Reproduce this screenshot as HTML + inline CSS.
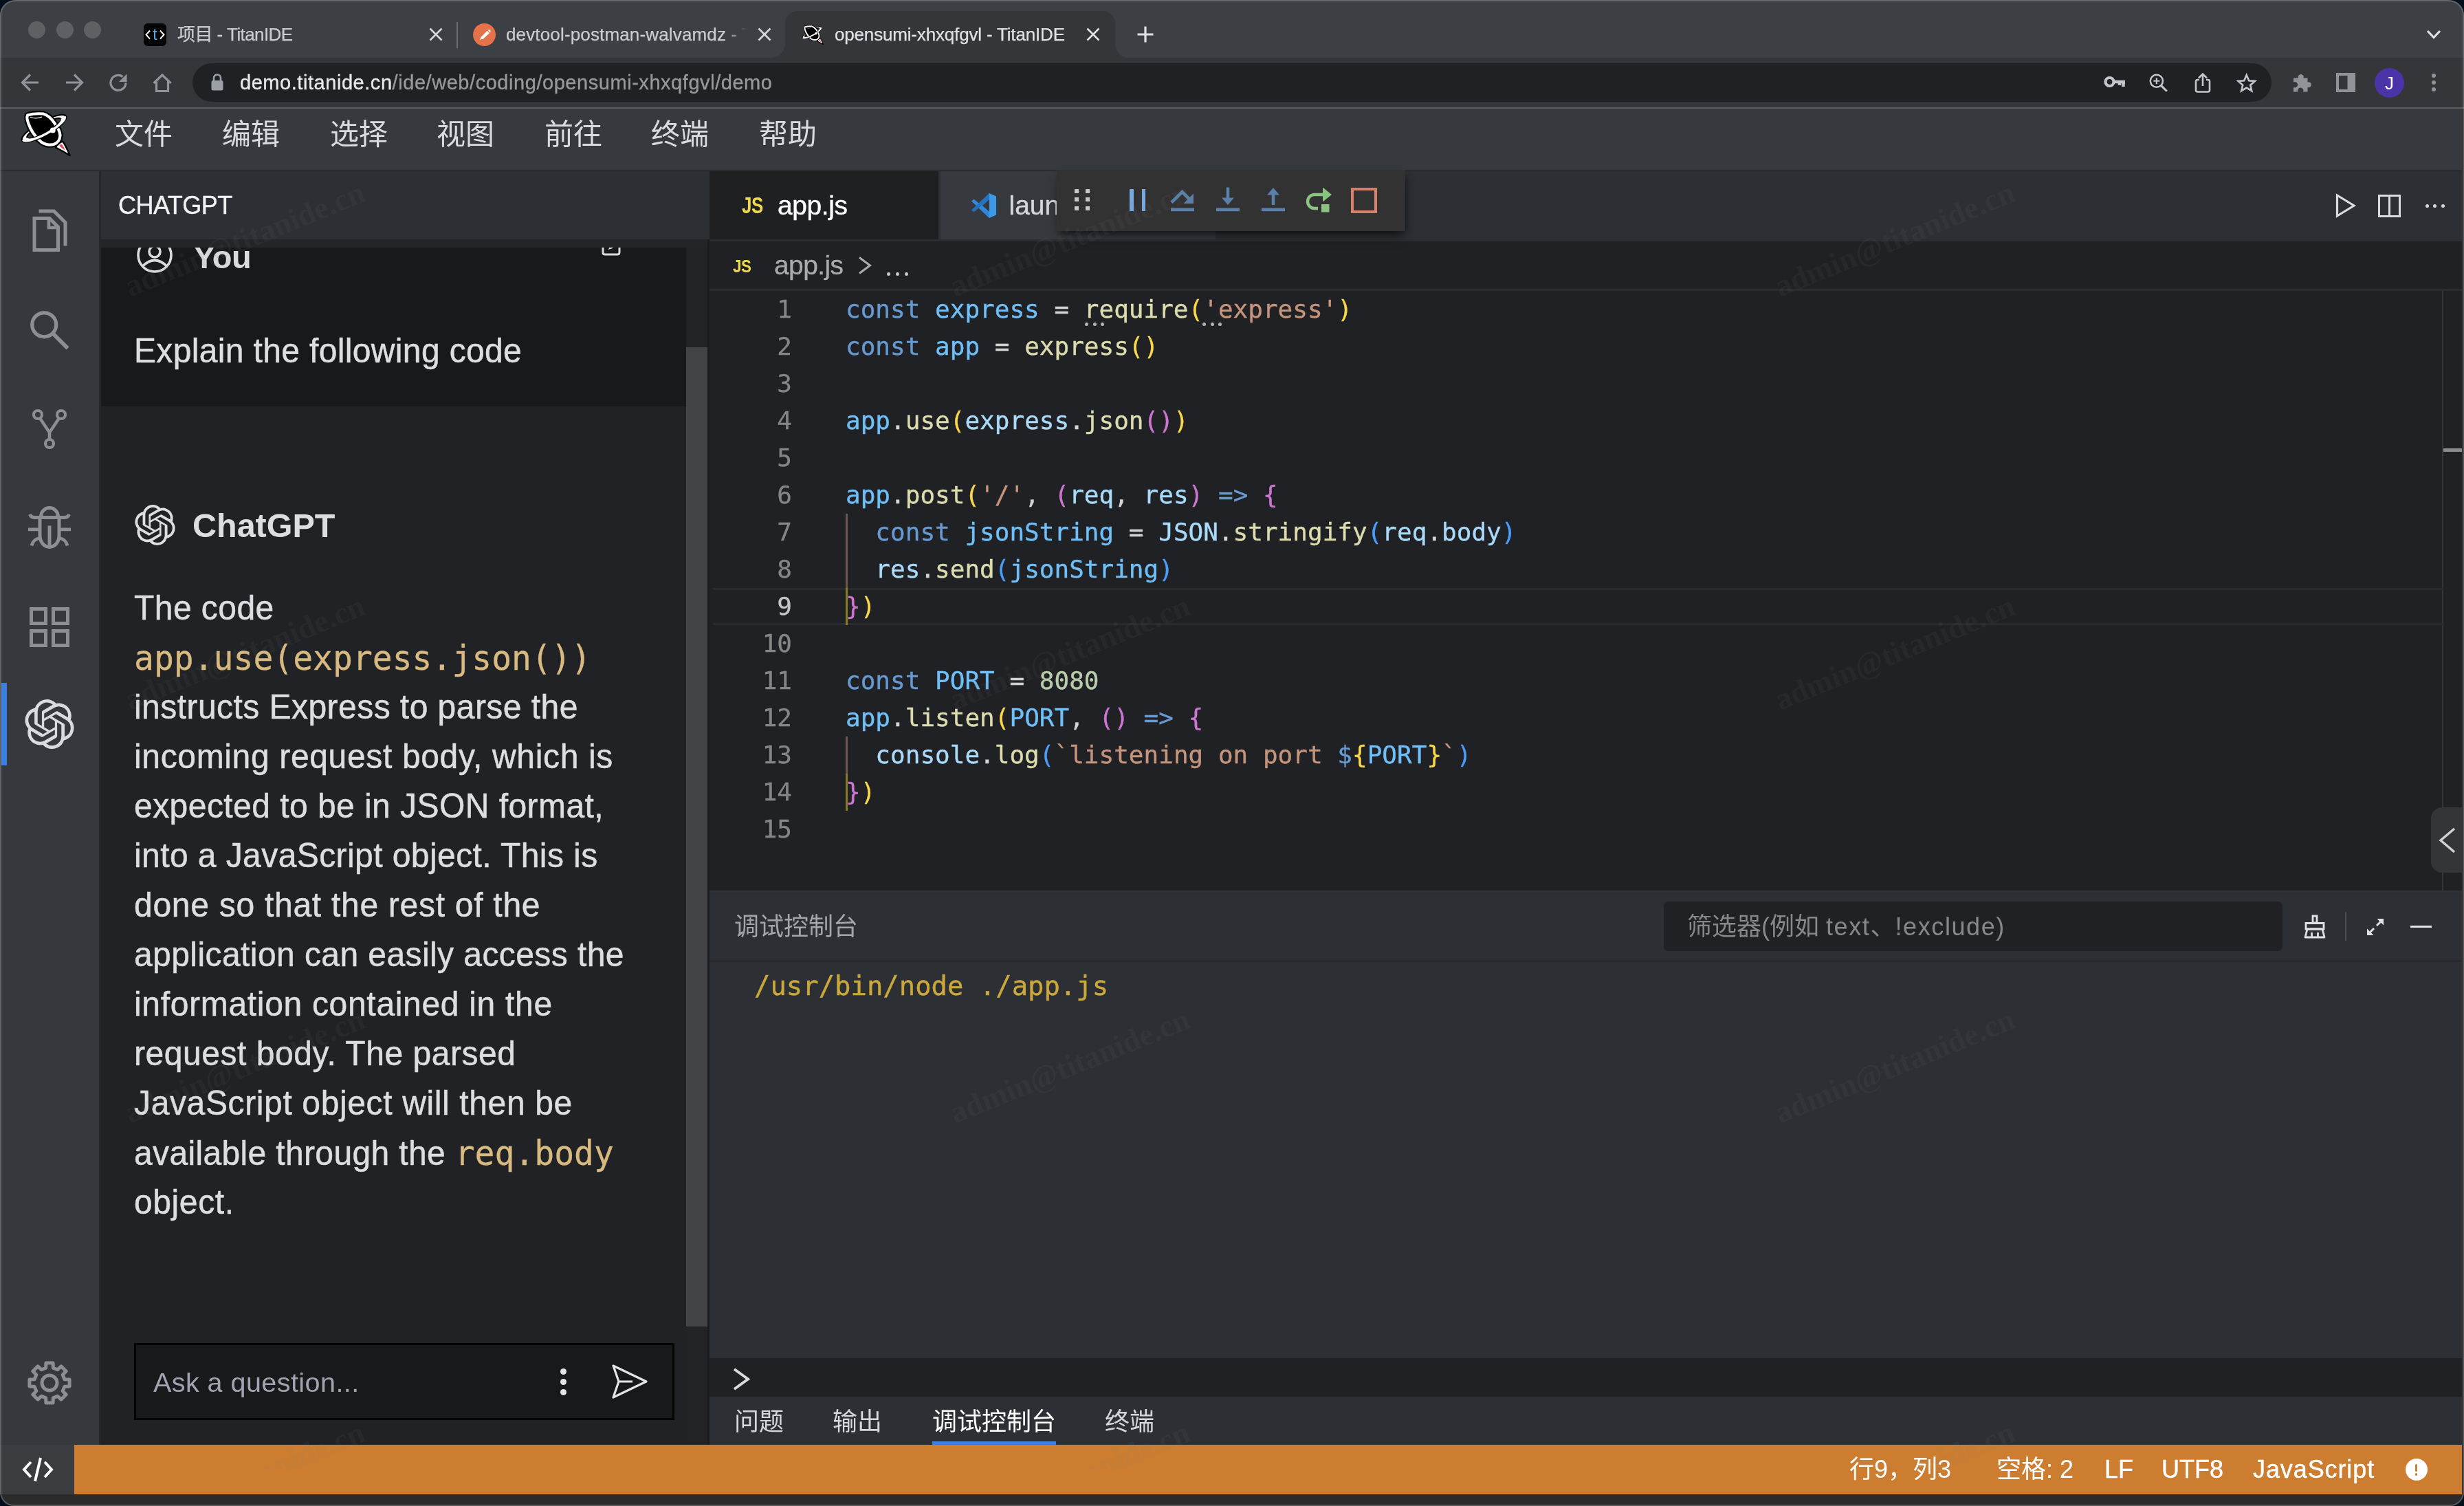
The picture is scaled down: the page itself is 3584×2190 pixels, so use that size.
<!DOCTYPE html>
<html lang="zh-CN"><head><meta charset="utf-8"><title>opensumi-xhxqfgvl - TitanIDE</title>
<style>
html,body{margin:0;padding:0;background:#050e1c;}
body{width:3584px;height:2190px;overflow:hidden;position:relative;font-family:"Liberation Sans","Noto Sans CJK SC",sans-serif;}
#win{position:absolute;left:0;top:0;width:3584px;height:2190px;border-radius:22px 22px 20px 20px;overflow:hidden;background:#2b2b2b;will-change:transform;}
#win div,#win svg{box-sizing:border-box}
.mono{font-family:"DejaVu Sans Mono","Liberation Mono","Noto Sans CJK SC",monospace;}
.wm{position:absolute;font-family:"Liberation Serif",serif;font-weight:bold;font-size:45.5px;color:rgba(125,125,125,.08);transform:rotate(-22.2deg);transform-origin:center;white-space:nowrap;width:440px;height:60px;line-height:60px;text-align:center;pointer-events:none}
</style></head><body><div id="win">
<!-- tab strip -->
<div style="position:absolute;left:0px;top:0px;width:3584px;height:84px;background:#3c3f43;"></div>
<div style="position:absolute;left:41.0px;top:30.5px;width:25px;height:25px;background:#5e6063;border-radius:50%"></div>
<div style="position:absolute;left:81.5px;top:30.5px;width:25px;height:25px;background:#5e6063;border-radius:50%"></div>
<div style="position:absolute;left:121.5px;top:30.5px;width:25px;height:25px;background:#5e6063;border-radius:50%"></div>
<div style="position:absolute;left:0px;top:84px;width:3584px;height:73px;background:#35363a;"></div>
<div style="position:absolute;left:1142px;top:16px;width:480px;height:70px;background:#35363a;border-radius:18px 18px 0 0"></div>
<svg style="position:absolute;left:1122px;top:64px;" width="20" height="20" viewBox="0 0 20 20" fill="none"><path d="M20 0 V20 H0 A20 20 0 0 0 20 0Z" fill="#35363a"/></svg>
<svg style="position:absolute;left:1622px;top:64px;" width="20" height="20" viewBox="0 0 20 20" fill="none"><path d="M0 0 V20 H20 A20 20 0 0 1 0 0Z" fill="#35363a"/></svg>
<div style="position:absolute;left:209px;top:34px;width:33px;height:33px;background:#050505;border-radius:6px"></div>
<svg style="position:absolute;left:209px;top:34px;" width="33" height="33" viewBox="0 0 33 33" fill="none"><path d="M9 10.5 L3.5 16.5 L9 22.5 M24 10.5 L29.5 16.5 L24 22.5" stroke="#fff" stroke-width="1.9" fill="none"/></svg>
<div style="position:absolute;left:209px;top:26.5px;height:46px;line-height:46px;font-size:23px;color:#5aa9e6;white-space:pre;width:33px;text-align:center;">t</div>
<div style="position:absolute;left:258px;top:24.0px;height:52px;line-height:52px;font-size:26px;color:#c9ccd0;white-space:pre;letter-spacing:-0.6px;-webkit-text-stroke-width:0.25px;">项目 - TitanIDE</div>
<svg style="position:absolute;left:622px;top:38px;" width="24" height="24" viewBox="0 0 24 24" fill="none"><path d="M3.5 3.5 L20.5 20.5 M20.5 3.5 L3.5 20.5" stroke="#d5d7da" stroke-width="2.6"/></svg>
<div style="position:absolute;left:664px;top:32px;width:2px;height:38px;background:#6a6d70;"></div>
<svg style="position:absolute;left:688px;top:34px;" width="33" height="33" viewBox="0 0 33 33" fill="none"><circle cx="16.5" cy="16.5" r="16.5" fill="#e6724a"/><path d="M9.5 24.5 L12 19.5 L21 10.5 Q23.5 8 25 10 Q26.5 12 24 14 L15 22.5 Z" fill="#fff"/><path d="M20.5 9.5 L24.5 14" stroke="#e6724a" stroke-width="1.2"/><path d="M9.5 24.5 L13.5 23.2" stroke="#e6724a" stroke-width="1"/></svg>
<div style="position:absolute;left:736px;top:24px;width:354px;height:52px;overflow:hidden;-webkit-mask-image:linear-gradient(90deg,#000 0,#000 318px,transparent 350px);mask-image:linear-gradient(90deg,#000 0,#000 318px,transparent 350px)"><div style="position:absolute;left:0px;top:0.0px;height:52px;line-height:52px;font-size:26px;color:#c9ccd0;white-space:pre;letter-spacing:0.15px;-webkit-text-stroke-width:0.25px;">devtool-postman-walvamdz - TitanIDE</div></div>
<svg style="position:absolute;left:1100px;top:38px;" width="24" height="24" viewBox="0 0 24 24" fill="none"><path d="M3.5 3.5 L20.5 20.5 M20.5 3.5 L3.5 20.5" stroke="#d5d7da" stroke-width="2.6"/></svg>
<svg style="position:absolute;left:1161.6px;top:34.7px;" width="43.75" height="35" viewBox="0 0 100 80" fill="none"><defs><clipPath id="cfa"><rect x="0" y="-10" width="100" height="38.7"/></clipPath><clipPath id="cna"><rect x="0" y="28.7" width="100" height="40"/></clipPath></defs><g transform="rotate(-29 44 28.7)"><path clip-path="url(#cfa)" fill-rule="evenodd" d="M7.5 28.7 A36.5 10 0 1 0 80.5 28.7 A36.5 10 0 1 0 7.5 28.7 Z M16 28.7 A28 6.6 0 1 1 72 28.7 A28 6.6 0 1 1 16 28.7Z" fill="#fff" stroke="#000" stroke-width="2.2"/></g><path d="M61 56.5 Q63 50 71 47.5 Q76 54 81.5 68 Q70 61 61 56.5Z" fill="#fff" stroke="#000" stroke-width="2.4" stroke-linejoin="round"/><path d="M66.5 53.5 Q68.5 50.5 71 53 L75 60.8 Q69 57.5 66.5 53.5Z" fill="#e8505b"/><path d="M20 9.5 Q30 6.5 43 7.5 Q52 10 60 22 Q67 31 67.5 39 Q67 49 58 52 Q48 54 40 48.5 Q30 40 24 28 Q17.5 14 20 9.5Z" fill="#000" stroke="#000" stroke-width="8.4" stroke-linejoin="round"/><path d="M20 9.5 Q30 6.5 43 7.5 Q52 10 60 22 Q67 31 67.5 39 Q67 49 58 52 Q48 54 40 48.5 Q30 40 24 28 Q17.5 14 20 9.5Z" fill="#000" stroke="#fff" stroke-width="4.2" stroke-linejoin="round"/><path d="M24 12.2 Q32 15.6 41 12" stroke="#fff" stroke-width="1.1" fill="none"/><g transform="rotate(-29 44 28.7)"><path clip-path="url(#cna)" fill-rule="evenodd" d="M7.5 28.7 A36.5 10 0 1 0 80.5 28.7 A36.5 10 0 1 0 7.5 28.7 Z M16 28.7 A28 6.6 0 1 1 72 28.7 A28 6.6 0 1 1 16 28.7Z" fill="#fff" stroke="#000" stroke-width="2.2"/><path clip-path="url(#cna)" fill-rule="evenodd" d="M7.5 28.7 A36.5 10 0 1 0 80.5 28.7 A36.5 10 0 1 0 7.5 28.7 Z M16 28.7 A28 6.6 0 1 1 72 28.7 A28 6.6 0 1 1 16 28.7Z" fill="#fff"/></g><circle cx="56.8" cy="31.4" r="3.9" fill="#fff"/></svg>
<div style="position:absolute;left:1214px;top:24.0px;height:52px;line-height:52px;font-size:26px;color:#dfe1e5;white-space:pre;letter-spacing:-0.17px;-webkit-text-stroke-width:0.25px;">opensumi-xhxqfgvl - TitanIDE</div>
<svg style="position:absolute;left:1578px;top:38px;" width="24" height="24" viewBox="0 0 24 24" fill="none"><path d="M3.5 3.5 L20.5 20.5 M20.5 3.5 L3.5 20.5" stroke="#dfe1e5" stroke-width="2.6"/></svg>
<svg style="position:absolute;left:1652px;top:36px;" width="28" height="28" viewBox="0 0 28 28" fill="none"><path d="M14 2.5 V25.5 M2.5 14 H25.5" stroke="#dfe1e5" stroke-width="3.2"/></svg>
<svg style="position:absolute;left:3526px;top:40px;" width="28" height="20" viewBox="0 0 28 20" fill="none"><path d="M5 5 L14 14.5 L23 5" stroke="#dfe1e5" stroke-width="3.2"/></svg>
<!-- toolbar -->
<svg style="position:absolute;left:28px;top:104px;" width="32" height="32" viewBox="0 0 32 32" fill="none"><path d="M28 16 H5 M16 4.5 L4.5 16 L16 27.5" stroke="#909398" stroke-width="3.2"/></svg>
<svg style="position:absolute;left:92px;top:104px;" width="32" height="32" viewBox="0 0 32 32" fill="none"><path d="M4 16 H27 M16 4.5 L27.5 16 L16 27.5" stroke="#909398" stroke-width="3.2"/></svg>
<svg style="position:absolute;left:156px;top:104px;" width="32" height="32" viewBox="0 0 32 32" fill="none"><path d="M27 16.5 A11 11 0 1 1 22.5 7.5" stroke="#909398" stroke-width="3.2"/><path d="M28.5 3.5 V15 H17 Z" fill="#909398"/></svg>
<svg style="position:absolute;left:220px;top:104px;" width="32" height="32" viewBox="0 0 32 32" fill="none"><path d="M3.5 17 L16 5 L28.5 17 M7.5 14.5 V28.5 H24.5 V14.5" stroke="#909398" stroke-width="3.2"/></svg>
<div style="position:absolute;left:280px;top:92px;width:3024px;height:56px;background:#202124;border-radius:28px"></div>
<svg style="position:absolute;left:306px;top:106px;" width="20" height="28" viewBox="0 0 20 28" fill="none"><rect x="1.5" y="11" width="17" height="14.5" rx="2.5" fill="#9aa0a6"/><path d="M5 12 V7.5 A5 5 0 0 1 15 7.5 V12" stroke="#9aa0a6" stroke-width="2.6"/></svg>
<div style="position:absolute;left:349px;top:91.0px;height:58px;line-height:58px;font-size:29px;color:#98999c;white-space:pre;letter-spacing:0.55px;-webkit-text-stroke-width:0.35px;"><span style="color:#e8eaed">demo.titanide.cn</span>/ide/web/coding/opensumi-xhxqfgvl/demo</div>
<svg style="position:absolute;left:3060px;top:106px;" width="34" height="28" viewBox="0 0 34 28" fill="none"><circle cx="8.5" cy="13" r="6" stroke="#c3c6ca" stroke-width="4.2"/><path d="M14 13 H31 M28.5 13 V20 M23 13 V18" stroke="#c3c6ca" stroke-width="4.6"/></svg>
<svg style="position:absolute;left:3125px;top:106px;" width="31" height="29" viewBox="0 0 34 32" fill="none"><circle cx="13" cy="13" r="10" stroke="#c3c6ca" stroke-width="2.8"/><path d="M20.5 20.5 L29.5 29.5" stroke="#c3c6ca" stroke-width="3.4"/><path d="M13 8 V18 M8 13 H18" stroke="#c3c6ca" stroke-width="2.4"/></svg>
<svg style="position:absolute;left:3191px;top:105px;" width="26" height="31" viewBox="0 0 26 31" fill="none"><path d="M8 11 H5.5 Q3 11 3 13.5 V26 Q3 28.5 5.5 28.5 H20.5 Q23 28.5 23 26 V13.5 Q23 11 20.5 11 H18" stroke="#c3c6ca" stroke-width="2.6"/><path d="M13 20 V3 M7 8.5 L13 2.5 L19 8.5" stroke="#c3c6ca" stroke-width="2.6"/></svg>
<svg style="position:absolute;left:3253.3px;top:105.5px;" width="29.4" height="29.4" viewBox="0 0 32 32" fill="none"><path d="M16 3.5 L19.8 12.2 L29.2 13 L22 19.2 L24.2 28.5 L16 23.6 L7.8 28.5 L10 19.2 L2.8 13 L12.2 12.2 Z" stroke="#c3c6ca" stroke-width="2.9" stroke-linejoin="miter"/></svg>
<svg style="position:absolute;left:3333px;top:104px;" width="32" height="32" viewBox="0 0 32 32" fill="none"><path d="M3 9.5 H10 A4 4 0 1 1 17.5 9.5 H23.5 V15.5 A4 4 0 1 1 23.5 23 V29.5 H17 A4.2 4.2 0 1 0 9.5 29.5 H3 V23 A4.2 4.2 0 1 0 3 15.5 Z" fill="#909398"/></svg>
<svg style="position:absolute;left:3398px;top:106px;" width="28" height="28" viewBox="0 0 28 28" fill="none"><rect x="2" y="2" width="24" height="24" stroke="#909398" stroke-width="4"/><rect x="16.5" y="2" width="10" height="24" fill="#909398"/></svg>
<div style="position:absolute;left:3454px;top:98.5px;width:43px;height:43px;background:#4a34a8;border-radius:50%"></div>
<div style="position:absolute;left:3454px;top:94.5px;height:52px;line-height:52px;font-size:26px;color:#fff;white-space:pre;width:43px;text-align:center;">J</div>
<div style="position:absolute;left:3536.8px;top:106.6px;width:6.4px;height:6.4px;background:#909398;border-radius:50%"></div>
<div style="position:absolute;left:3536.8px;top:116.8px;width:6.4px;height:6.4px;background:#909398;border-radius:50%"></div>
<div style="position:absolute;left:3536.8px;top:126.99999999999999px;width:6.4px;height:6.4px;background:#909398;border-radius:50%"></div>
<div style="position:absolute;left:0px;top:155.5px;width:3584px;height:2.5px;background:#5b5d60;"></div>
<!-- IDE menubar -->
<div style="position:absolute;left:0px;top:158px;width:3584px;height:89px;background:#36393d;"></div>
<svg style="position:absolute;left:20px;top:158px;" width="100" height="80" viewBox="0 0 100 80" fill="none"><defs><clipPath id="cfb"><rect x="0" y="-10" width="100" height="38.7"/></clipPath><clipPath id="cnb"><rect x="0" y="28.7" width="100" height="40"/></clipPath></defs><g transform="rotate(-29 44 28.7)"><path clip-path="url(#cfb)" fill-rule="evenodd" d="M7.5 28.7 A36.5 10 0 1 0 80.5 28.7 A36.5 10 0 1 0 7.5 28.7 Z M16 28.7 A28 6.6 0 1 1 72 28.7 A28 6.6 0 1 1 16 28.7Z" fill="#fff" stroke="#000" stroke-width="2.2"/></g><path d="M61 56.5 Q63 50 71 47.5 Q76 54 81.5 68 Q70 61 61 56.5Z" fill="#fff" stroke="#000" stroke-width="2.4" stroke-linejoin="round"/><path d="M66.5 53.5 Q68.5 50.5 71 53 L75 60.8 Q69 57.5 66.5 53.5Z" fill="#e8505b"/><path d="M20 9.5 Q30 6.5 43 7.5 Q52 10 60 22 Q67 31 67.5 39 Q67 49 58 52 Q48 54 40 48.5 Q30 40 24 28 Q17.5 14 20 9.5Z" fill="#000" stroke="#000" stroke-width="8.4" stroke-linejoin="round"/><path d="M20 9.5 Q30 6.5 43 7.5 Q52 10 60 22 Q67 31 67.5 39 Q67 49 58 52 Q48 54 40 48.5 Q30 40 24 28 Q17.5 14 20 9.5Z" fill="#000" stroke="#fff" stroke-width="4.2" stroke-linejoin="round"/><path d="M24 12.2 Q32 15.6 41 12" stroke="#fff" stroke-width="1.1" fill="none"/><g transform="rotate(-29 44 28.7)"><path clip-path="url(#cnb)" fill-rule="evenodd" d="M7.5 28.7 A36.5 10 0 1 0 80.5 28.7 A36.5 10 0 1 0 7.5 28.7 Z M16 28.7 A28 6.6 0 1 1 72 28.7 A28 6.6 0 1 1 16 28.7Z" fill="#fff" stroke="#000" stroke-width="2.2"/><path clip-path="url(#cnb)" fill-rule="evenodd" d="M7.5 28.7 A36.5 10 0 1 0 80.5 28.7 A36.5 10 0 1 0 7.5 28.7 Z M16 28.7 A28 6.6 0 1 1 72 28.7 A28 6.6 0 1 1 16 28.7Z" fill="#fff"/></g><circle cx="56.8" cy="31.4" r="3.9" fill="#fff"/></svg>
<div style="position:absolute;left:167px;top:154.0px;height:84px;line-height:84px;font-size:42px;color:#d9dbde;white-space:pre;font-family:"Liberation Sans","Noto Sans CJK SC",sans-serif;-webkit-text-stroke-width:0.5px;">文件</div>
<div style="position:absolute;left:323px;top:154.0px;height:84px;line-height:84px;font-size:42px;color:#d9dbde;white-space:pre;font-family:"Liberation Sans","Noto Sans CJK SC",sans-serif;-webkit-text-stroke-width:0.5px;">编辑</div>
<div style="position:absolute;left:480px;top:154.0px;height:84px;line-height:84px;font-size:42px;color:#d9dbde;white-space:pre;font-family:"Liberation Sans","Noto Sans CJK SC",sans-serif;-webkit-text-stroke-width:0.5px;">选择</div>
<div style="position:absolute;left:635px;top:154.0px;height:84px;line-height:84px;font-size:42px;color:#d9dbde;white-space:pre;font-family:"Liberation Sans","Noto Sans CJK SC",sans-serif;-webkit-text-stroke-width:0.5px;">视图</div>
<div style="position:absolute;left:792px;top:154.0px;height:84px;line-height:84px;font-size:42px;color:#d9dbde;white-space:pre;font-family:"Liberation Sans","Noto Sans CJK SC",sans-serif;-webkit-text-stroke-width:0.5px;">前往</div>
<div style="position:absolute;left:947px;top:154.0px;height:84px;line-height:84px;font-size:42px;color:#d9dbde;white-space:pre;font-family:"Liberation Sans","Noto Sans CJK SC",sans-serif;-webkit-text-stroke-width:0.5px;">终端</div>
<div style="position:absolute;left:1104px;top:154.0px;height:84px;line-height:84px;font-size:42px;color:#d9dbde;white-space:pre;font-family:"Liberation Sans","Noto Sans CJK SC",sans-serif;-webkit-text-stroke-width:0.5px;">帮助</div>
<!-- activity bar -->
<div style="position:absolute;left:0px;top:247px;width:144px;height:1855px;background:#35383c;"></div>
<div style="position:absolute;left:0px;top:247px;width:3584px;height:2px;background:#2a2c2f;"></div>
<svg style="position:absolute;left:36.0px;top:299.5px;" width="72" height="72" viewBox="0 0 72 72" fill="none"><path d="M20.5 7 H42.5 L59 23.5 V57.5" stroke="#8b8e92" stroke-width="5" fill="none"/><path d="M14 17.5 H36 L48.5 30 V63.5 H14 Z" stroke="#8b8e92" stroke-width="5" stroke-linejoin="miter"/><path d="M35 17 V31 H49" stroke="#8b8e92" stroke-width="4.6"/></svg>
<svg style="position:absolute;left:36.0px;top:443.7px;" width="72" height="72" viewBox="0 0 72 72" fill="none"><circle cx="28.2" cy="28.3" r="17.5" stroke="#8b8e92" stroke-width="5.2"/><path d="M41 41 L62.5 62.5" stroke="#8b8e92" stroke-width="5.6"/></svg>
<svg style="position:absolute;left:36.0px;top:587.5px;" width="72" height="72" viewBox="0 0 72 72" fill="none"><circle cx="19" cy="15" r="6" stroke="#8b8e92" stroke-width="4.2"/><circle cx="53" cy="15" r="6" stroke="#8b8e92" stroke-width="4.2"/><circle cx="36" cy="57" r="6" stroke="#8b8e92" stroke-width="4.2"/><path d="M22 20 L36 41 L50 20 M36 41 V51" stroke="#8b8e92" stroke-width="4.5"/></svg>
<svg style="position:absolute;left:36.0px;top:732.0px;" width="72" height="72" viewBox="0 0 72 72" fill="none"><path d="M23.5 19 A12.5 12.5 0 0 1 48.5 19" stroke="#8b8e92" stroke-width="5"/><path d="M7.5 16 Q9 20.5 14 20.5 H58 Q63 20.5 64.5 16" stroke="#8b8e92" stroke-width="5"/><path d="M22 20 V47 A14 16.5 0 0 0 50 47 V20" stroke="#8b8e92" stroke-width="5"/><path d="M36 32.5 V63" stroke="#8b8e92" stroke-width="5"/><path d="M5 37.8 H20 M52 37.8 H67 M23 50 Q12 52 10 61.5 M49 50 Q60 52 62 61.5" stroke="#8b8e92" stroke-width="4.8"/></svg>
<svg style="position:absolute;left:36.0px;top:876.0px;" width="72" height="72" viewBox="0 0 72 72" fill="none"><rect x="9.5" y="9.5" width="21" height="21" stroke="#8b8e92" stroke-width="5"/><rect x="41.5" y="9.5" width="21" height="21" stroke="#8b8e92" stroke-width="5"/><rect x="9.5" y="41.5" width="21" height="21" stroke="#8b8e92" stroke-width="5"/><rect x="41.5" y="41.5" width="21" height="21" stroke="#8b8e92" stroke-width="5"/></svg>
<div style="position:absolute;left:2px;top:993px;width:7.5px;height:120px;background:#3b7fe0;"></div>
<svg style="position:absolute;left:36px;top:1016.5px;" width="72" height="72" viewBox="0 0 24 24" fill="none"><path d="M22.2819 9.8211a5.9847 5.9847 0 0 0-.5157-4.9108 6.0462 6.0462 0 0 0-6.5098-2.9A6.0651 6.0651 0 0 0 4.9807 4.1818a5.9847 5.9847 0 0 0-3.9977 2.9 6.0462 6.0462 0 0 0 .7427 7.0966 5.98 5.98 0 0 0 .511 4.9107 6.051 6.051 0 0 0 6.5146 2.9001A5.9847 5.9847 0 0 0 13.2599 24a6.0557 6.0557 0 0 0 5.7718-4.2058 5.9894 5.9894 0 0 0 3.9977-2.9001 6.0557 6.0557 0 0 0-.7475-7.0729zm-9.022 12.6081a4.4755 4.4755 0 0 1-2.8764-1.0408l.1419-.0804 4.7783-2.7582a.7948.7948 0 0 0 .3927-.6813v-6.7369l2.02 1.1686a.071.071 0 0 1 .038.052v5.5826a4.504 4.504 0 0 1-4.4945 4.4944zm-9.6607-4.1254a4.4708 4.4708 0 0 1-.5346-3.0137l.142.0852 4.783 2.7582a.7712.7712 0 0 0 .7806 0l5.8428-3.3685v2.3324a.0804.0804 0 0 1-.0332.0615L9.74 19.9502a4.4992 4.4992 0 0 1-6.1408-1.6464zM2.3408 7.8956a4.485 4.485 0 0 1 2.3655-1.9728V11.6a.7664.7664 0 0 0 .3879.6765l5.8144 3.3543-2.0201 1.1685a.0757.0757 0 0 1-.071 0l-4.8303-2.7865A4.504 4.504 0 0 1 2.3408 7.872zm16.5963 3.8558L13.1038 8.364 15.1192 7.2a.0757.0757 0 0 1 .071 0l4.8303 2.7913a4.4944 4.4944 0 0 1-.6765 8.1042v-5.6772a.79.79 0 0 0-.407-.667zm2.0107-3.0231l-.142-.0852-4.7735-2.7818a.7759.7759 0 0 0-.7854 0L9.409 9.2297V6.8974a.0662.0662 0 0 1 .0284-.0615l4.8303-2.7866a4.4992 4.4992 0 0 1 6.6802 4.66zM8.3065 12.863l-2.02-1.1638a.0804.0804 0 0 1-.038-.0567V6.0742a4.4992 4.4992 0 0 1 7.3757-3.4537l-.142.0805L8.704 5.459a.7948.7948 0 0 0-.3927.6813zm1.0976-2.3654l2.602-1.4998 2.6069 1.4998v2.9994l-2.5974 1.4997-2.6067-1.4997Z" fill="#d9dbde"/></svg>
<svg style="position:absolute;left:36px;top:1974.7px;" width="72" height="72" viewBox="0 0 72 72" fill="none"><path d="M65.1 30.9 L65.1 41.1 L57.9 41.3 L55.2 47.8 L60.1 53.0 L53.0 60.1 L47.8 55.2 L41.3 57.9 L41.1 65.1 L30.9 65.1 L30.7 57.9 L24.2 55.2 L19.0 60.1 L11.9 53.0 L16.8 47.8 L14.1 41.3 L6.9 41.1 L6.9 30.9 L14.1 30.7 L16.8 24.2 L11.9 19.0 L19.0 11.9 L24.2 16.8 L30.7 14.1 L30.9 6.9 L41.1 6.9 L41.3 14.1 L47.8 16.8 L53.0 11.9 L60.1 19.0 L55.2 24.2 L57.9 30.7Z" stroke="#8b8e92" stroke-width="5" stroke-linejoin="round"/><circle cx="36" cy="36" r="11" stroke="#8b8e92" stroke-width="5"/></svg>
<!-- chat panel -->
<div style="position:absolute;left:144px;top:249px;width:888px;height:1853px;background:#212225;"></div>
<div style="position:absolute;left:144px;top:249px;width:3px;height:1853px;background:#25272a;"></div>
<div style="position:absolute;left:998px;top:348px;width:31px;height:1754px;background:#222326;"></div>
<div style="position:absolute;left:998px;top:505px;width:31px;height:1424px;background:#434447;"></div>
<div style="position:absolute;left:1029px;top:348px;width:3px;height:1754px;background:#1b1c1e;"></div>
<div style="position:absolute;left:1029px;top:249px;width:3px;height:99px;background:#2c2f33;"></div>
<div style="position:absolute;left:147px;top:360px;width:851px;height:231px;background:#18191b;"></div>
<svg style="position:absolute;left:198px;top:344px;" width="54" height="54" viewBox="0 0 54 54" fill="none"><circle cx="27" cy="27" r="24" stroke="#d9dbde" stroke-width="3.6"/><circle cx="27" cy="22" r="8" stroke="#d9dbde" stroke-width="3.6"/><path d="M9.5 43 Q27 26 44.5 43" stroke="#d9dbde" stroke-width="3.6"/></svg>
<div style="position:absolute;left:281.5px;top:327.0px;height:94px;line-height:94px;font-size:47px;color:#d9dbde;white-space:pre;font-weight:bold;letter-spacing:-0.5px;">You</div>
<svg style="position:absolute;left:874px;top:345px;" width="30" height="28" viewBox="0 0 30 28" fill="none"><path d="M15 4 H6 Q3 4 3 7 V22 Q3 25 6 25 H24 Q27 25 27 22 V13" stroke="#d9dbde" stroke-width="3"/><path d="M11 18 L13 12 L24 1 L28 5 L17 16 Z" fill="#d9dbde"/></svg>
<div style="position:absolute;left:147px;top:249px;width:882px;height:99px;background:#2c2f33;"></div>
<div style="position:absolute;left:147px;top:348px;width:882px;height:12px;background:#242528;"></div>
<div style="position:absolute;left:172px;top:262.5px;height:72px;line-height:72px;font-size:36px;color:#f0f1f2;white-space:pre;letter-spacing:-0.5px;-webkit-text-stroke:0.4px #f0f1f2;">CHATGPT</div>
<div style="position:absolute;left:195px;top:462.5px;height:96px;line-height:96px;font-size:48px;color:#dcdee2;white-space:pre;letter-spacing:0.35px;-webkit-text-stroke:0.5px #dcdee2;transform:scaleY(1.045);transform-origin:0 67.3%;">Explain the following code</div>
<svg style="position:absolute;left:195.5px;top:733.5px;" width="59" height="59" viewBox="0 0 24 24" fill="none"><path d="M22.2819 9.8211a5.9847 5.9847 0 0 0-.5157-4.9108 6.0462 6.0462 0 0 0-6.5098-2.9A6.0651 6.0651 0 0 0 4.9807 4.1818a5.9847 5.9847 0 0 0-3.9977 2.9 6.0462 6.0462 0 0 0 .7427 7.0966 5.98 5.98 0 0 0 .511 4.9107 6.051 6.051 0 0 0 6.5146 2.9001A5.9847 5.9847 0 0 0 13.2599 24a6.0557 6.0557 0 0 0 5.7718-4.2058 5.9894 5.9894 0 0 0 3.9977-2.9001 6.0557 6.0557 0 0 0-.7475-7.0729zm-9.022 12.6081a4.4755 4.4755 0 0 1-2.8764-1.0408l.1419-.0804 4.7783-2.7582a.7948.7948 0 0 0 .3927-.6813v-6.7369l2.02 1.1686a.071.071 0 0 1 .038.052v5.5826a4.504 4.504 0 0 1-4.4945 4.4944zm-9.6607-4.1254a4.4708 4.4708 0 0 1-.5346-3.0137l.142.0852 4.783 2.7582a.7712.7712 0 0 0 .7806 0l5.8428-3.3685v2.3324a.0804.0804 0 0 1-.0332.0615L9.74 19.9502a4.4992 4.4992 0 0 1-6.1408-1.6464zM2.3408 7.8956a4.485 4.485 0 0 1 2.3655-1.9728V11.6a.7664.7664 0 0 0 .3879.6765l5.8144 3.3543-2.0201 1.1685a.0757.0757 0 0 1-.071 0l-4.8303-2.7865A4.504 4.504 0 0 1 2.3408 7.872zm16.5963 3.8558L13.1038 8.364 15.1192 7.2a.0757.0757 0 0 1 .071 0l4.8303 2.7913a4.4944 4.4944 0 0 1-.6765 8.1042v-5.6772a.79.79 0 0 0-.407-.667zm2.0107-3.0231l-.142-.0852-4.7735-2.7818a.7759.7759 0 0 0-.7854 0L9.409 9.2297V6.8974a.0662.0662 0 0 1 .0284-.0615l4.8303-2.7866a4.4992 4.4992 0 0 1 6.6802 4.66zM8.3065 12.863l-2.02-1.1638a.0804.0804 0 0 1-.038-.0567V6.0742a4.4992 4.4992 0 0 1 7.3757-3.4537l-.142.0805L8.704 5.459a.7948.7948 0 0 0-.3927.6813zm1.0976-2.3654l2.602-1.4998 2.6069 1.4998v2.9994l-2.5974 1.4997-2.6067-1.4997Z" fill="#dcdee2"/></svg>
<div style="position:absolute;left:280px;top:715.5px;height:97px;line-height:97px;font-size:48.5px;color:#dcdee2;white-space:pre;font-weight:bold;">ChatGPT</div>
<div style="position:absolute;left:195px;top:837.0px;height:96px;line-height:96px;font-size:48px;color:#dcdee2;white-space:pre;letter-spacing:0.45px;-webkit-text-stroke:0.5px #dcdee2;transform:scaleY(1.045);transform-origin:0 67.3%;">The code</div>
<div style="position:absolute;left:195px;top:909.0px;height:96px;line-height:96px;font-size:48px;color:#dcdee2;white-space:pre;letter-spacing:0px;-webkit-text-stroke:0.5px #dcdee2;transform:scaleY(1.045);transform-origin:0 67.3%;"><span class="mono" style="color:#d8ba80;font-size:48px;letter-spacing:0;-webkit-text-stroke:0.3px #d8ba80">app.use(express.json())</span></div>
<div style="position:absolute;left:195px;top:981.0px;height:96px;line-height:96px;font-size:48px;color:#dcdee2;white-space:pre;letter-spacing:0.45px;-webkit-text-stroke:0.5px #dcdee2;transform:scaleY(1.045);transform-origin:0 67.3%;">instructs Express to parse the</div>
<div style="position:absolute;left:195px;top:1053.0px;height:96px;line-height:96px;font-size:48px;color:#dcdee2;white-space:pre;letter-spacing:0.65px;-webkit-text-stroke:0.5px #dcdee2;transform:scaleY(1.045);transform-origin:0 67.3%;">incoming request body, which is</div>
<div style="position:absolute;left:195px;top:1125.0px;height:96px;line-height:96px;font-size:48px;color:#dcdee2;white-space:pre;letter-spacing:0.45px;-webkit-text-stroke:0.5px #dcdee2;transform:scaleY(1.045);transform-origin:0 67.3%;">expected to be in JSON format,</div>
<div style="position:absolute;left:195px;top:1197.0px;height:96px;line-height:96px;font-size:48px;color:#dcdee2;white-space:pre;letter-spacing:0.42px;-webkit-text-stroke:0.5px #dcdee2;transform:scaleY(1.045);transform-origin:0 67.3%;">into a JavaScript object. This is</div>
<div style="position:absolute;left:195px;top:1269.0px;height:96px;line-height:96px;font-size:48px;color:#dcdee2;white-space:pre;letter-spacing:0.72px;-webkit-text-stroke:0.5px #dcdee2;transform:scaleY(1.045);transform-origin:0 67.3%;">done so that the rest of the</div>
<div style="position:absolute;left:195px;top:1341.0px;height:96px;line-height:96px;font-size:48px;color:#dcdee2;white-space:pre;letter-spacing:0.42px;-webkit-text-stroke:0.5px #dcdee2;transform:scaleY(1.045);transform-origin:0 67.3%;">application can easily access the</div>
<div style="position:absolute;left:195px;top:1413.0px;height:96px;line-height:96px;font-size:48px;color:#dcdee2;white-space:pre;letter-spacing:0.68px;-webkit-text-stroke:0.5px #dcdee2;transform:scaleY(1.045);transform-origin:0 67.3%;">information contained in the</div>
<div style="position:absolute;left:195px;top:1485.0px;height:96px;line-height:96px;font-size:48px;color:#dcdee2;white-space:pre;letter-spacing:0.54px;-webkit-text-stroke:0.5px #dcdee2;transform:scaleY(1.045);transform-origin:0 67.3%;">request body. The parsed</div>
<div style="position:absolute;left:195px;top:1557.0px;height:96px;line-height:96px;font-size:48px;color:#dcdee2;white-space:pre;letter-spacing:0.63px;-webkit-text-stroke:0.5px #dcdee2;transform:scaleY(1.045);transform-origin:0 67.3%;">JavaScript object will then be</div>
<div style="position:absolute;left:195px;top:1629.0px;height:96px;line-height:96px;font-size:48px;color:#dcdee2;white-space:pre;letter-spacing:0.35px;-webkit-text-stroke:0.5px #dcdee2;transform:scaleY(1.045);transform-origin:0 67.3%;">available through the <span class="mono" style="color:#d8ba80;font-size:48px;letter-spacing:0;-webkit-text-stroke:0.3px #d8ba80">req.body</span></div>
<div style="position:absolute;left:195px;top:1701.0px;height:96px;line-height:96px;font-size:48px;color:#dcdee2;white-space:pre;letter-spacing:0.6px;-webkit-text-stroke:0.5px #dcdee2;transform:scaleY(1.045);transform-origin:0 67.3%;">object.</div>
<div style="position:absolute;left:195px;top:1953px;width:786px;height:112px;background:#18191b;border:3px solid #050506"></div>
<div style="position:absolute;left:223px;top:1970.5px;height:79px;line-height:79px;font-size:39.5px;color:#a0a4b0;white-space:pre;letter-spacing:0.45px;">Ask a question...</div>
<div style="position:absolute;left:814.5px;top:1990.0px;width:9px;height:9px;background:#e3e4e6;border-radius:50%"></div>
<div style="position:absolute;left:814.5px;top:2005.0px;width:9px;height:9px;background:#e3e4e6;border-radius:50%"></div>
<div style="position:absolute;left:814.5px;top:2020.0px;width:9px;height:9px;background:#e3e4e6;border-radius:50%"></div>
<svg style="position:absolute;left:888px;top:1982px;" width="56" height="54" viewBox="0 0 56 54" fill="none"><path d="M4 4 L52 27 L4 50 L12 27 Z M12 27 H32" stroke="#e3e4e6" stroke-width="3.2" stroke-linejoin="round"/></svg>
<!-- editor -->
<div style="position:absolute;left:1032px;top:249px;width:2552px;height:1046px;background:#202124;"></div>
<div style="position:absolute;left:1032px;top:249px;width:2552px;height:99px;background:#2c2f33;"></div>
<div style="position:absolute;left:1032px;top:249px;width:333px;height:99px;background:#1f2022;"></div>
<div style="position:absolute;left:1365px;top:249px;width:3px;height:99px;background:#2c2f33;"></div>
<div style="position:absolute;left:1368px;top:249px;width:400px;height:99px;background:#363a3e;"></div>
<div style="position:absolute;left:1032px;top:347.5px;width:2552px;height:3.5px;background:#2b2d31;"></div>
<div style="position:absolute;left:1079px;top:267.0px;height:65px;line-height:65px;font-size:32.5px;color:#efd94c;white-space:pre;font-weight:bold;transform:scaleX(0.8);transform-origin:0 50%;letter-spacing:-0.5px;">JS</div>
<div style="position:absolute;left:1131px;top:260.0px;height:78px;line-height:78px;font-size:39px;color:#ffffff;white-space:pre;letter-spacing:-0.4px;-webkit-text-stroke-width:0.4px;">app.js</div>
<svg style="position:absolute;left:1412px;top:280px;" width="38" height="38" viewBox="0 0 38 38" fill="none"><path d="M27 1 L37 5.5 V32.5 L27 37 Z" fill="#3c99e8"/><path d="M27 1 L8 19 L27 37 V28 L17 19 L27 10 Z" fill="#2b7fd0"/><path d="M1 12.5 L4.5 9.5 L27 28 V37 Z" fill="#3189dc"/><path d="M1 25.5 L4.5 28.5 L27 10 V1 Z" fill="#2672be" opacity="0.95"/></svg>
<div style="position:absolute;left:1467.5px;top:260.0px;height:78px;line-height:78px;font-size:39px;color:#d5d7da;white-space:pre;letter-spacing:0px;-webkit-text-stroke-width:0.4px;">launch.json</div>
<svg style="position:absolute;left:3394px;top:279px;" width="36" height="40" viewBox="0 0 36 40" fill="none"><path d="M5.5 5 L30 20 L5.5 35 Z" stroke="#d9dbde" stroke-width="3.2" stroke-linejoin="miter"/></svg>
<svg style="position:absolute;left:3458px;top:282px;" width="35" height="35" viewBox="0 0 35 35" fill="none"><rect x="2.5" y="2.5" width="30" height="30" stroke="#d9dbde" stroke-width="3"/><path d="M17.5 2 V33" stroke="#d9dbde" stroke-width="3"/></svg>
<div style="position:absolute;left:3527.6px;top:296.9px;width:5.2px;height:5.2px;background:#d9dbde;border-radius:50%"></div>
<div style="position:absolute;left:3539.1px;top:296.9px;width:5.2px;height:5.2px;background:#d9dbde;border-radius:50%"></div>
<div style="position:absolute;left:3550.6px;top:296.9px;width:5.2px;height:5.2px;background:#d9dbde;border-radius:50%"></div>
<div style="position:absolute;left:1032px;top:420px;width:2552px;height:3px;background:#2b2d31;"></div>
<div style="position:absolute;left:1066px;top:361.0px;height:52px;line-height:52px;font-size:26px;color:#efd94c;white-space:pre;font-weight:bold;transform:scaleX(0.86);transform-origin:0 50%;letter-spacing:-0.5px;">JS</div>
<div style="position:absolute;left:1126px;top:346.5px;height:78px;line-height:78px;font-size:39px;color:#a9abae;white-space:pre;letter-spacing:-0.6px;-webkit-text-stroke-width:0.3px;">app.js</div>
<svg style="position:absolute;left:1247px;top:371px;" width="22" height="30" viewBox="0 0 22 30" fill="none"><path d="M3 3.5 L18.5 15 L3 26.5" stroke="#a9abae" stroke-width="3"/></svg>
<div style="position:absolute;left:1289.5px;top:395.5px;width:5.5px;height:5.5px;background:#c5c7ca;border-radius:50%"></div>
<div style="position:absolute;left:1302.5px;top:395.5px;width:5.5px;height:5.5px;background:#c5c7ca;border-radius:50%"></div>
<div style="position:absolute;left:1315.5px;top:395.5px;width:5.5px;height:5.5px;background:#c5c7ca;border-radius:50%"></div>
<div style="position:absolute;left:3552px;top:423px;width:1.5px;height:872px;background:#34363a;"></div>
<div style="position:absolute;left:3553.5px;top:652px;width:28px;height:5px;background:#8c8c8c;"></div>
<div style="position:absolute;left:1037px;top:855px;width:2516px;height:54px;background:transparent;border-top:3px solid #2a2b2e;border-bottom:3px solid #2a2b2e"></div>
<div class="mono" style="position:absolute;left:1052px;top:422.5px;height:54px;line-height:54px;font-size:36px;color:#858585;white-space:pre;width:100px;text-align:right;-webkit-text-stroke-width:0.3px;">1</div>
<div class="mono" style="position:absolute;left:1230px;top:422.5px;height:54px;line-height:54px;font-size:36px;color:#d4d4d4;white-space:pre;-webkit-text-stroke-width:0.35px;"><span style="color:#679ad1">const</span><span style="color:#d4d4d4"> </span><span style="color:#6fbff9">express</span><span style="color:#d4d4d4"> = </span><span style="color:#dcdcaf">require</span><span style="color:#f9d849">(</span><span style="color:#c5947c">&#x27;express&#x27;</span><span style="color:#f9d849">)</span></div>
<div class="mono" style="position:absolute;left:1052px;top:476.5px;height:54px;line-height:54px;font-size:36px;color:#858585;white-space:pre;width:100px;text-align:right;-webkit-text-stroke-width:0.3px;">2</div>
<div class="mono" style="position:absolute;left:1230px;top:476.5px;height:54px;line-height:54px;font-size:36px;color:#d4d4d4;white-space:pre;-webkit-text-stroke-width:0.35px;"><span style="color:#679ad1">const</span><span style="color:#d4d4d4"> </span><span style="color:#6fbff9">app</span><span style="color:#d4d4d4"> = </span><span style="color:#dcdcaf">express</span><span style="color:#f9d849">()</span></div>
<div class="mono" style="position:absolute;left:1052px;top:530.5px;height:54px;line-height:54px;font-size:36px;color:#858585;white-space:pre;width:100px;text-align:right;-webkit-text-stroke-width:0.3px;">3</div>
<div class="mono" style="position:absolute;left:1052px;top:584.5px;height:54px;line-height:54px;font-size:36px;color:#858585;white-space:pre;width:100px;text-align:right;-webkit-text-stroke-width:0.3px;">4</div>
<div class="mono" style="position:absolute;left:1230px;top:584.5px;height:54px;line-height:54px;font-size:36px;color:#d4d4d4;white-space:pre;-webkit-text-stroke-width:0.35px;"><span style="color:#6fbff9">app</span><span style="color:#d4d4d4">.</span><span style="color:#dcdcaf">use</span><span style="color:#f9d849">(</span><span style="color:#aadafa">express</span><span style="color:#d4d4d4">.</span><span style="color:#dcdcaf">json</span><span style="color:#cc76d1">()</span><span style="color:#f9d849">)</span></div>
<div class="mono" style="position:absolute;left:1052px;top:638.5px;height:54px;line-height:54px;font-size:36px;color:#858585;white-space:pre;width:100px;text-align:right;-webkit-text-stroke-width:0.3px;">5</div>
<div class="mono" style="position:absolute;left:1052px;top:692.5px;height:54px;line-height:54px;font-size:36px;color:#858585;white-space:pre;width:100px;text-align:right;-webkit-text-stroke-width:0.3px;">6</div>
<div class="mono" style="position:absolute;left:1230px;top:692.5px;height:54px;line-height:54px;font-size:36px;color:#d4d4d4;white-space:pre;-webkit-text-stroke-width:0.35px;"><span style="color:#6fbff9">app</span><span style="color:#d4d4d4">.</span><span style="color:#dcdcaf">post</span><span style="color:#f9d849">(</span><span style="color:#c5947c">&#x27;/&#x27;</span><span style="color:#d4d4d4">, </span><span style="color:#cc76d1">(</span><span style="color:#aadafa">req</span><span style="color:#d4d4d4">, </span><span style="color:#aadafa">res</span><span style="color:#cc76d1">)</span><span style="color:#d4d4d4"> </span><span style="color:#679ad1">=&gt;</span><span style="color:#d4d4d4"> </span><span style="color:#cc76d1">{</span></div>
<div class="mono" style="position:absolute;left:1052px;top:746.5px;height:54px;line-height:54px;font-size:36px;color:#858585;white-space:pre;width:100px;text-align:right;-webkit-text-stroke-width:0.3px;">7</div>
<div class="mono" style="position:absolute;left:1230px;top:746.5px;height:54px;line-height:54px;font-size:36px;color:#d4d4d4;white-space:pre;-webkit-text-stroke-width:0.35px;"><span style="color:#d4d4d4">  </span><span style="color:#679ad1">const</span><span style="color:#d4d4d4"> </span><span style="color:#6fbff9">jsonString</span><span style="color:#d4d4d4"> = </span><span style="color:#aadafa">JSON</span><span style="color:#d4d4d4">.</span><span style="color:#dcdcaf">stringify</span><span style="color:#4a9df8">(</span><span style="color:#aadafa">req</span><span style="color:#d4d4d4">.</span><span style="color:#aadafa">body</span><span style="color:#4a9df8">)</span></div>
<div class="mono" style="position:absolute;left:1052px;top:800.5px;height:54px;line-height:54px;font-size:36px;color:#858585;white-space:pre;width:100px;text-align:right;-webkit-text-stroke-width:0.3px;">8</div>
<div class="mono" style="position:absolute;left:1230px;top:800.5px;height:54px;line-height:54px;font-size:36px;color:#d4d4d4;white-space:pre;-webkit-text-stroke-width:0.35px;"><span style="color:#d4d4d4">  </span><span style="color:#aadafa">res</span><span style="color:#d4d4d4">.</span><span style="color:#dcdcaf">send</span><span style="color:#4a9df8">(</span><span style="color:#6fbff9">jsonString</span><span style="color:#4a9df8">)</span></div>
<div class="mono" style="position:absolute;left:1052px;top:854.5px;height:54px;line-height:54px;font-size:36px;color:#c6c6c6;white-space:pre;width:100px;text-align:right;-webkit-text-stroke-width:0.3px;">9</div>
<div class="mono" style="position:absolute;left:1230px;top:854.5px;height:54px;line-height:54px;font-size:36px;color:#d4d4d4;white-space:pre;-webkit-text-stroke-width:0.35px;"><span style="color:#cc76d1">}</span><span style="color:#f9d849">)</span></div>
<div class="mono" style="position:absolute;left:1052px;top:908.5px;height:54px;line-height:54px;font-size:36px;color:#858585;white-space:pre;width:100px;text-align:right;-webkit-text-stroke-width:0.3px;">10</div>
<div class="mono" style="position:absolute;left:1052px;top:962.5px;height:54px;line-height:54px;font-size:36px;color:#858585;white-space:pre;width:100px;text-align:right;-webkit-text-stroke-width:0.3px;">11</div>
<div class="mono" style="position:absolute;left:1230px;top:962.5px;height:54px;line-height:54px;font-size:36px;color:#d4d4d4;white-space:pre;-webkit-text-stroke-width:0.35px;"><span style="color:#679ad1">const</span><span style="color:#d4d4d4"> </span><span style="color:#6fbff9">PORT</span><span style="color:#d4d4d4"> = </span><span style="color:#bacdab">8080</span></div>
<div class="mono" style="position:absolute;left:1052px;top:1016.5px;height:54px;line-height:54px;font-size:36px;color:#858585;white-space:pre;width:100px;text-align:right;-webkit-text-stroke-width:0.3px;">12</div>
<div class="mono" style="position:absolute;left:1230px;top:1016.5px;height:54px;line-height:54px;font-size:36px;color:#d4d4d4;white-space:pre;-webkit-text-stroke-width:0.35px;"><span style="color:#6fbff9">app</span><span style="color:#d4d4d4">.</span><span style="color:#dcdcaf">listen</span><span style="color:#f9d849">(</span><span style="color:#6fbff9">PORT</span><span style="color:#d4d4d4">, </span><span style="color:#cc76d1">()</span><span style="color:#d4d4d4"> </span><span style="color:#679ad1">=&gt;</span><span style="color:#d4d4d4"> </span><span style="color:#cc76d1">{</span></div>
<div class="mono" style="position:absolute;left:1052px;top:1070.5px;height:54px;line-height:54px;font-size:36px;color:#858585;white-space:pre;width:100px;text-align:right;-webkit-text-stroke-width:0.3px;">13</div>
<div class="mono" style="position:absolute;left:1230px;top:1070.5px;height:54px;line-height:54px;font-size:36px;color:#d4d4d4;white-space:pre;-webkit-text-stroke-width:0.35px;"><span style="color:#d4d4d4">  </span><span style="color:#aadafa">console</span><span style="color:#d4d4d4">.</span><span style="color:#dcdcaf">log</span><span style="color:#4a9df8">(</span><span style="color:#c5947c">`listening on port </span><span style="color:#679ad1">$</span><span style="color:#f9d849">{</span><span style="color:#6fbff9">PORT</span><span style="color:#f9d849">}</span><span style="color:#c5947c">`</span><span style="color:#4a9df8">)</span></div>
<div class="mono" style="position:absolute;left:1052px;top:1124.5px;height:54px;line-height:54px;font-size:36px;color:#858585;white-space:pre;width:100px;text-align:right;-webkit-text-stroke-width:0.3px;">14</div>
<div class="mono" style="position:absolute;left:1230px;top:1124.5px;height:54px;line-height:54px;font-size:36px;color:#d4d4d4;white-space:pre;-webkit-text-stroke-width:0.35px;"><span style="color:#cc76d1">}</span><span style="color:#f9d849">)</span></div>
<div class="mono" style="position:absolute;left:1052px;top:1178.5px;height:54px;line-height:54px;font-size:36px;color:#858585;white-space:pre;width:100px;text-align:right;-webkit-text-stroke-width:0.3px;">15</div>
<div style="position:absolute;left:1230px;top:747px;width:3px;height:108px;background:#6e5650;"></div>
<div style="position:absolute;left:1230px;top:855px;width:3px;height:54px;background:#8a7a22;"></div>
<div style="position:absolute;left:1230px;top:1071px;width:3px;height:54px;background:#6e5650;"></div>
<div style="position:absolute;left:1230px;top:1125px;width:3px;height:54px;background:#8a7a22;"></div>
<div style="position:absolute;left:1578.0px;top:468.5px;width:5px;height:5px;background:#b4b4b4;border-radius:50%"></div>
<div style="position:absolute;left:1589.5px;top:468.5px;width:5px;height:5px;background:#b4b4b4;border-radius:50%"></div>
<div style="position:absolute;left:1601.0px;top:468.5px;width:5px;height:5px;background:#b4b4b4;border-radius:50%"></div>
<div style="position:absolute;left:1749.0px;top:468.5px;width:5px;height:5px;background:#b4b4b4;border-radius:50%"></div>
<div style="position:absolute;left:1760.5px;top:468.5px;width:5px;height:5px;background:#b4b4b4;border-radius:50%"></div>
<div style="position:absolute;left:1772.0px;top:468.5px;width:5px;height:5px;background:#b4b4b4;border-radius:50%"></div>
<div style="position:absolute;left:1537px;top:247px;width:507px;height:88.5px;background:#323233;box-shadow:0 10px 14px -4px rgba(0,0,0,.55), 4px 4px 10px -4px rgba(0,0,0,.4)"></div>
<div style="position:absolute;left:1562.5px;top:274.5px;width:6px;height:6px;background:#c8c8c8;"></div>
<div style="position:absolute;left:1578.5px;top:274.5px;width:6px;height:6px;background:#c8c8c8;"></div>
<div style="position:absolute;left:1562.5px;top:287.0px;width:6px;height:6px;background:#c8c8c8;"></div>
<div style="position:absolute;left:1578.5px;top:287.0px;width:6px;height:6px;background:#c8c8c8;"></div>
<div style="position:absolute;left:1562.5px;top:299.5px;width:6px;height:6px;background:#c8c8c8;"></div>
<div style="position:absolute;left:1578.5px;top:299.5px;width:6px;height:6px;background:#c8c8c8;"></div>
<div style="position:absolute;left:1643px;top:275px;width:5.5px;height:32px;background:#76a9e2;"></div>
<div style="position:absolute;left:1660.5px;top:275px;width:5.5px;height:32px;background:#76a9e2;"></div>
<svg style="position:absolute;left:1700px;top:271px;" width="40" height="40" viewBox="0 0 40 40" fill="none"><path d="M4 23.5 L19.5 8 L31 19.5" stroke="#5a7fa8" stroke-width="4.6"/><path d="M36 10.5 V25 H21.5 Z" fill="#5a7fa8"/><path d="M3 33.8 H37" stroke="#5a7fa8" stroke-width="4.8"/></svg>
<svg style="position:absolute;left:1766px;top:271px;" width="40" height="40" viewBox="0 0 40 40" fill="none"><path d="M20 1.5 V20" stroke="#5a7fa8" stroke-width="4.6"/><path d="M11 16.5 L20 27 L29 16.5 Z" fill="#5a7fa8"/><path d="M3 33.8 H37" stroke="#5a7fa8" stroke-width="4.8"/></svg>
<svg style="position:absolute;left:1832px;top:271px;" width="40" height="40" viewBox="0 0 40 40" fill="none"><path d="M20 9 V27" stroke="#5a7fa8" stroke-width="4.6"/><path d="M11 12.5 L20 2 L29 12.5 Z" fill="#5a7fa8"/><path d="M3 33.8 H37" stroke="#5a7fa8" stroke-width="4.8"/></svg>
<svg style="position:absolute;left:1897px;top:270px;" width="42" height="42" viewBox="0 0 42 42" fill="none"><path d="M30 13 H15 A10 10 0 0 0 15 33 H20" stroke="#8ac47f" stroke-width="4.4"/><path d="M27 2.5 L40 13 L27 23.5 Z" fill="#8ac47f"/><rect x="25" y="27" width="11.5" height="11.5" fill="#8ac47f"/></svg>
<div style="position:absolute;left:1965px;top:272.5px;width:38px;height:37px;background:transparent;border:4.6px solid #d9806b"></div>
<div style="position:absolute;left:3536px;top:1174px;width:48px;height:95px;background:#333538;border-radius:16px 0 0 16px"></div>
<svg style="position:absolute;left:3544px;top:1200px;" width="36" height="44" viewBox="0 0 36 44" fill="none"><path d="M26 5 L6 22 L26 39" stroke="#cfd1d4" stroke-width="3.4"/></svg>
<!-- bottom panel -->
<div style="position:absolute;left:1032px;top:1295px;width:2552px;height:807px;background:#2c2f33;"></div>
<div style="position:absolute;left:1032px;top:1295px;width:2552px;height:2px;background:#2f3236;"></div>
<div style="position:absolute;left:1032px;top:1396px;width:2552px;height:3px;background:#27292c;"></div>
<div style="position:absolute;left:1068px;top:1312.0px;height:72px;line-height:72px;font-size:36px;color:#a4a6a9;white-space:pre;font-family:"Liberation Sans","Noto Sans CJK SC",sans-serif;-webkit-text-stroke-width:0.3px;">调试控制台</div>
<div style="position:absolute;left:2420px;top:1310.5px;width:900px;height:72px;background:#202124;border-radius:7px"></div>
<div style="position:absolute;left:2454px;top:1312.0px;height:72px;line-height:72px;font-size:36px;color:#86888b;white-space:pre;font-family:"Liberation Sans","Noto Sans CJK SC",sans-serif;letter-spacing:0.4px;">筛选器(例如 <span style="letter-spacing:1.6px">text</span>、<span style="letter-spacing:1.6px">!exclude)</span></div>
<svg style="position:absolute;left:3350px;top:1330px;" width="34" height="36" viewBox="0 0 34 36" fill="none"><path d="M14 2 H20 V12 H14 Z" stroke="#dfe1e4" stroke-width="2.8"/><path d="M4 12.5 H30 V21 H4 Z" stroke="#dfe1e4" stroke-width="2.8"/><path d="M3 33 L6 21 H28 L31 33 Z" stroke="#dfe1e4" stroke-width="2.8" stroke-linejoin="round"/><path d="M12.5 33 V26 M21.5 33 V26" stroke="#dfe1e4" stroke-width="2.8"/></svg>
<div style="position:absolute;left:3410.5px;top:1326px;width:2px;height:42px;background:#4a4d51;"></div>
<svg style="position:absolute;left:3439px;top:1332px;" width="32" height="32" viewBox="0 0 32 32" fill="none"><path d="M18 14 L26 6" stroke="#dfe1e4" stroke-width="3"/><path d="M18.5 4 H28 V13.5 Z" fill="#dfe1e4"/><path d="M14 18 L6 26" stroke="#dfe1e4" stroke-width="3"/><path d="M13.5 28 H4 V18.5 Z" fill="#dfe1e4"/></svg>
<div style="position:absolute;left:3505.5px;top:1345.5px;width:31px;height:3.5px;background:#dfe1e4;"></div>
<div class="mono" style="position:absolute;left:1097px;top:1394.5px;height:77px;line-height:77px;font-size:38.9px;color:#cca83c;white-space:pre;-webkit-text-stroke-width:0.35px;">/usr/bin/node ./app.js</div>
<div style="position:absolute;left:1032px;top:1975px;width:2552px;height:56px;background:#202124;"></div>
<svg style="position:absolute;left:1064px;top:1986px;" width="30" height="40" viewBox="0 0 30 40" fill="none"><path d="M4 5 L24 19.5 L4 34" stroke="#d9dbde" stroke-width="4"/></svg>
<div style="position:absolute;left:1068px;top:2032.0px;height:72px;line-height:72px;font-size:36px;color:#d5d7da;white-space:pre;font-family:"Liberation Sans","Noto Sans CJK SC",sans-serif;-webkit-text-stroke-width:0.35px;">问题</div>
<div style="position:absolute;left:1211px;top:2032.0px;height:72px;line-height:72px;font-size:36px;color:#d5d7da;white-space:pre;font-family:"Liberation Sans","Noto Sans CJK SC",sans-serif;-webkit-text-stroke-width:0.35px;">输出</div>
<div style="position:absolute;left:1356px;top:2032.0px;height:72px;line-height:72px;font-size:36px;color:#ffffff;white-space:pre;font-family:"Liberation Sans","Noto Sans CJK SC",sans-serif;-webkit-text-stroke-width:0.35px;">调试控制台</div>
<div style="position:absolute;left:1607px;top:2032.0px;height:72px;line-height:72px;font-size:36px;color:#d5d7da;white-space:pre;font-family:"Liberation Sans","Noto Sans CJK SC",sans-serif;-webkit-text-stroke-width:0.35px;">终端</div>
<div style="position:absolute;left:1356px;top:2095.5px;width:180px;height:6px;background:#3a80df;"></div>
<!-- status bar -->
<div style="position:absolute;left:0px;top:2101px;width:3584px;height:72px;background:#cc7d30;"></div>
<div style="position:absolute;left:0px;top:2101px;width:108px;height:72px;background:#3a3c40;"></div>
<svg style="position:absolute;left:32px;top:2114px;" width="46" height="46" viewBox="0 0 46 46" fill="none"><path d="M13 12 L3 23 L13 34 M33 12 L43 23 L33 34 M27 6 L19 40" stroke="#fff" stroke-width="4"/></svg>
<div style="position:absolute;left:2690px;top:2101.0px;height:72px;line-height:72px;font-size:36px;color:#fff;white-space:pre;font-family:"Liberation Sans","Noto Sans CJK SC",sans-serif;letter-spacing:0.8px;-webkit-text-stroke-width:0.4px;">行9，列3</div>
<div style="position:absolute;left:2904px;top:2101.0px;height:72px;line-height:72px;font-size:36px;color:#fff;white-space:pre;font-family:"Liberation Sans","Noto Sans CJK SC",sans-serif;-webkit-text-stroke-width:0.4px;">空格: 2</div>
<div style="position:absolute;left:3061px;top:2101.0px;height:72px;line-height:72px;font-size:36px;color:#fff;white-space:pre;-webkit-text-stroke-width:0.4px;">LF</div>
<div style="position:absolute;left:3144px;top:2101.0px;height:72px;line-height:72px;font-size:36px;color:#fff;white-space:pre;-webkit-text-stroke-width:0.4px;">UTF8</div>
<div style="position:absolute;left:3277px;top:2101.0px;height:72px;line-height:72px;font-size:36px;color:#fff;white-space:pre;letter-spacing:0.9px;-webkit-text-stroke-width:0.4px;">JavaScript</div>
<div style="position:absolute;left:3498.5px;top:2121px;width:32px;height:32px;background:#fff;border-radius:50%"></div>
<div style="position:absolute;left:3513px;top:2128.5px;width:3px;height:11px;background:#cc7d30;border-radius:1.5px"></div>
<div style="position:absolute;left:3512.6px;top:2142.3px;width:3.8px;height:3.8px;background:#cc7d30;border-radius:50%"></div>
<div style="position:absolute;left:3581px;top:158px;width:3px;height:2032px;background:#2a2a2c;"></div>
<div style="position:absolute;left:0px;top:2173px;width:3584px;height:17px;background:#2b2b2b;"></div>
<div style="position:absolute;left:0;top:158px;width:3584px;height:1980px;overflow:hidden;pointer-events:none">
<div class="wm" style="left:136px;top:160px">admin@titanide.cn</div>
<div class="wm" style="left:136px;top:761px">admin@titanide.cn</div>
<div class="wm" style="left:136px;top:1362px">admin@titanide.cn</div>
<div class="wm" style="left:136px;top:1963px">admin@titanide.cn</div>
<div class="wm" style="left:1336px;top:160px">admin@titanide.cn</div>
<div class="wm" style="left:1336px;top:761px">admin@titanide.cn</div>
<div class="wm" style="left:1336px;top:1362px">admin@titanide.cn</div>
<div class="wm" style="left:1336px;top:1963px">admin@titanide.cn</div>
<div class="wm" style="left:2536px;top:160px">admin@titanide.cn</div>
<div class="wm" style="left:2536px;top:761px">admin@titanide.cn</div>
<div class="wm" style="left:2536px;top:1362px">admin@titanide.cn</div>
<div class="wm" style="left:2536px;top:1963px">admin@titanide.cn</div>
</div>
<div style="position:absolute;left:0;top:0;width:3584px;height:2190px;border-radius:22px 22px 20px 20px;box-shadow:inset 0 0 0 2px rgba(255,255,255,.22);pointer-events:none"></div></div></body></html>
